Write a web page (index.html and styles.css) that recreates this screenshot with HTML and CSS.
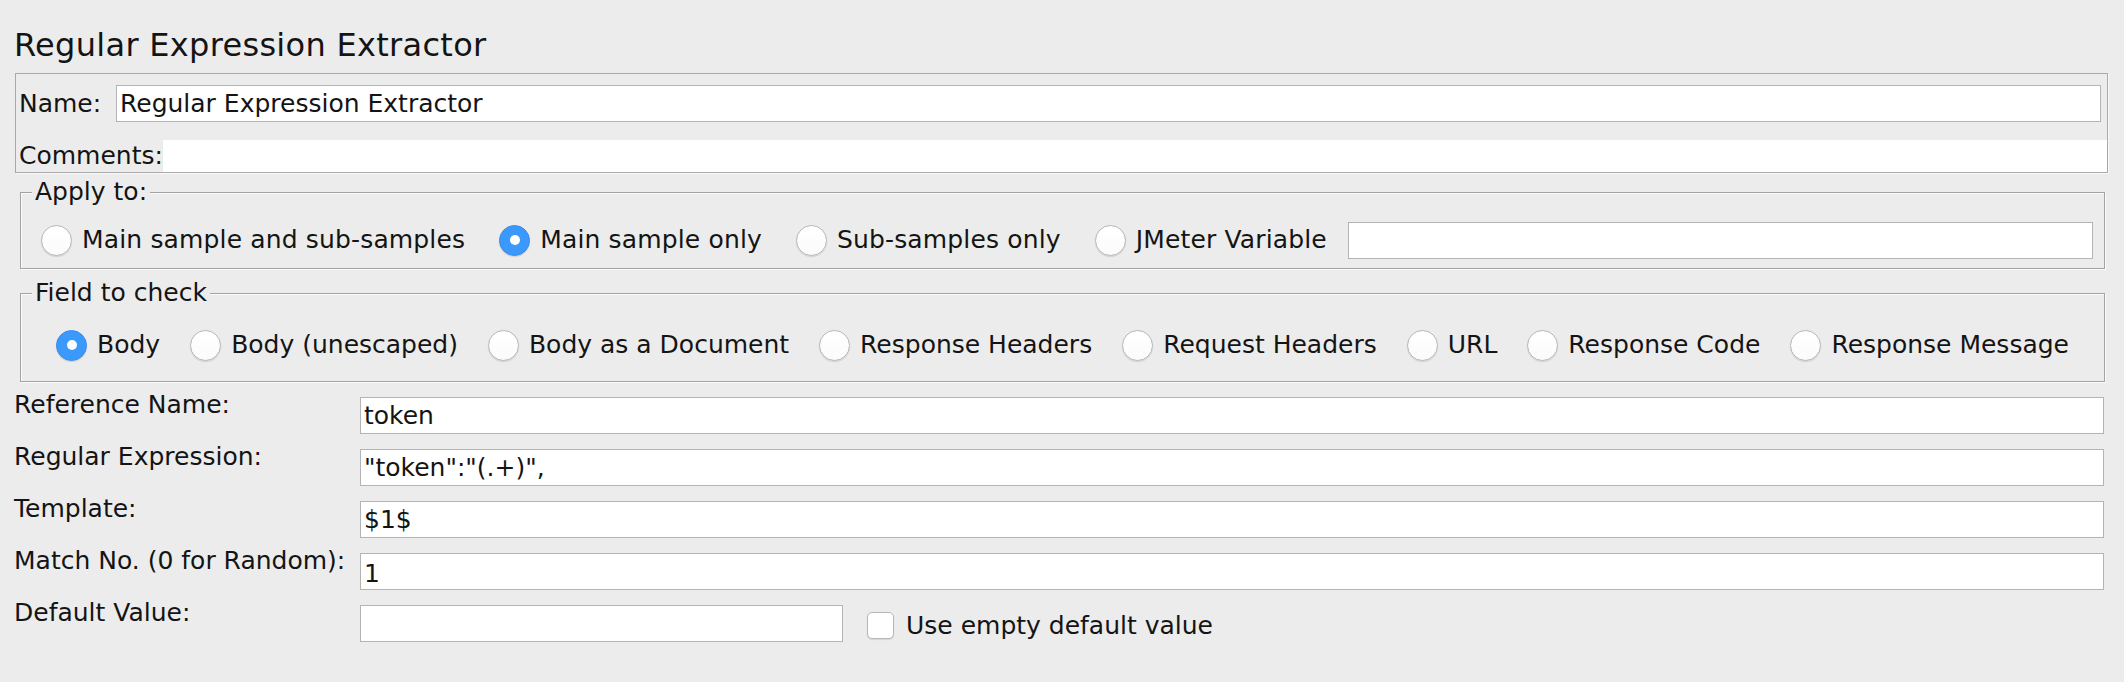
FILE: index.html
```html
<!DOCTYPE html>
<html>
<head>
<meta charset="utf-8">
<title>Regular Expression Extractor</title>
<link rel="stylesheet" href="styles.css">
</head>
<body>
<div class="page">
  <h1 class="title">Regular Expression Extractor</h1>

  <div class="namepanel">
    <div class="name-row">
      <label class="name-label">Name:</label>
      <input class="tf name-tf" type="text" value="Regular Expression Extractor">
    </div>
    <div class="comments-row">
      <label class="comments-label">Comments:</label>
      <div class="comments-area"></div>
    </div>
  </div>

  <fieldset class="group apply">
    <legend>Apply to:</legend>
    <div class="apply-row">
      <span class="radio"><span class="rb"></span><span class="rl">Main sample and sub-samples</span></span>
      <span class="radio"><span class="rb on"></span><span class="rl">Main sample only</span></span>
      <span class="radio"><span class="rb"></span><span class="rl">Sub-samples only</span></span>
      <span class="radio"><span class="rb"></span><span class="rl">JMeter Variable</span></span>
      <input class="tf var-tf" type="text" value="">
    </div>
  </fieldset>

  <fieldset class="group field">
    <legend>Field to check</legend>
    <div class="field-row">
      <span class="radio"><span class="rb on"></span><span class="rl">Body</span></span>
      <span class="radio"><span class="rb"></span><span class="rl">Body (unescaped)</span></span>
      <span class="radio"><span class="rb"></span><span class="rl">Body as a Document</span></span>
      <span class="radio"><span class="rb"></span><span class="rl">Response Headers</span></span>
      <span class="radio"><span class="rb"></span><span class="rl">Request Headers</span></span>
      <span class="radio"><span class="rb"></span><span class="rl">URL</span></span>
      <span class="radio"><span class="rb"></span><span class="rl">Response Code</span></span>
      <span class="radio"><span class="rb"></span><span class="rl">Response Message</span></span>
    </div>
  </fieldset>

  <div class="form">
    <label class="flabel">Reference Name:</label>
    <div class="fcell"><input class="tf" type="text" value="token"></div>

    <label class="flabel">Regular Expression:</label>
    <div class="fcell"><input class="tf" type="text" value="&quot;token&quot;:&quot;(.+)&quot;,"></div>

    <label class="flabel">Template:</label>
    <div class="fcell"><input class="tf" type="text" value="$1$"></div>

    <label class="flabel">Match No. (0 for Random):</label>
    <div class="fcell"><input class="tf match-tf" type="text" value="1"></div>

    <label class="flabel">Default Value:</label>
    <div class="fcell default-cell">
      <input class="tf default-tf" type="text" value="">
      <span class="cb"></span>
      <span class="cl">Use empty default value</span>
    </div>
  </div>
</div>
</body>
</html>
```

FILE: styles.css
```css
html, body {
  margin: 0;
  padding: 0;
  background: #ececec;
}

body {
  font-family: "DejaVu Sans", "Liberation Sans", sans-serif;
  font-size: 25px;
  color: #141414;
  width: 2124px;
  height: 682px;
  overflow: hidden;
}

.page {
  display: flex;
  flex-direction: column;
}

.title {
  margin: 0;
  padding: 26px 0 0 14px;
  font-size: 32px;
  font-weight: normal;
  line-height: 38px;
  letter-spacing: 0.3px;
  color: #141414;
}

/* text field */
.tf {
  box-sizing: border-box;
  height: 37px;
  margin: 0;
  padding: 0 3px;
  border: 1px solid #b4b4b4;
  background: #fff;
  font-family: inherit;
  font-size: 25px;
  color: #141414;
  outline: none;
}

/* name / comments panel */
.namepanel {
  margin: 9px 16px 0 15px;
  border: 1px solid #a9a9a9;
  box-shadow: 1px 1px 0 #fafafa;
}

.name-row {
  display: flex;
  align-items: center;
  padding: 11px 6px 0 3px;
}

.name-label {
  width: 97px;
  line-height: 30px;
}

.name-tf {
  flex: 1;
}

.comments-row {
  display: flex;
  align-items: center;
  margin-top: 18px;
  padding-left: 3px;
  height: 32px;
}

.comments-label {
  line-height: 30px;
}

.comments-area {
  flex: 1;
  align-self: stretch;
  background: #fff;
}

/* titled groups */
.group {
  margin: 4px 19px 0 20px;
  padding: 0;
  min-width: 0;
  border: 1px solid #a3a3a3;
  box-shadow: 1px 1px 0 #fbfbfb, inset 1px 1px 0 #fbfbfb;
}

.group legend {
  margin-left: 11px;
  padding: 0 3px;
  line-height: 30px;
  background: #ececec;
}

.field {
  margin-top: 9px;
}

.apply-row {
  display: flex;
  align-items: center;
  height: 38px;
  padding: 14px 11px 9px 20px;
}

.apply-row .rl {
  letter-spacing: 0.15px;
}

.field-row {
  display: flex;
  align-items: center;
  justify-content: center;
  gap: 30px;
  height: 38px;
  padding: 18px 0 17px 0;
}

.radio {
  display: inline-flex;
  align-items: center;
  white-space: nowrap;
  line-height: 30px;
}

.apply-row .radio {
  margin-right: 34px;
}

.apply-row .radio:nth-child(4) {
  margin-right: 21px;
}

.rb {
  position: relative;
  box-sizing: border-box;
  width: 31px;
  height: 31px;
  border-radius: 50%;
  background: linear-gradient(#ffffff, #fbfbfb);
  border: 1px solid #b7b7b7;
  box-shadow: 0 1px 1px rgba(0, 0, 0, 0.12);
  margin-right: 10px;
  flex: none;
}

.rb.on {
  background: #3b99fc;
  border-color: #378ef0;
}

.rb.on::after {
  content: "";
  position: absolute;
  left: 50%;
  top: 50%;
  width: 10px;
  height: 10px;
  margin: -5px 0 0 -5px;
  border-radius: 50%;
  background: #fff;
}

.var-tf {
  flex: 1;
  min-width: 0;
}

/* form grid */
.form {
  display: grid;
  grid-template-columns: 346px 1fr;
  row-gap: 8px;
  margin: 8px 20px 0 14px;
}

.flabel {
  line-height: 30px;
  align-self: start;
  white-space: nowrap;
}

.fcell {
  display: flex;
  align-items: center;
  padding-top: 7px;
}

.fcell .tf {
  flex: 1;
  min-width: 0;
}

.match-tf {
  padding-top: 4px;
}

.fcell .default-tf {
  flex: none;
  width: 483px;
}

.cb {
  box-sizing: border-box;
  width: 27px;
  height: 27px;
  margin-left: 24px;
  margin-top: 4px;
  border: 1px solid #b7b7b7;
  border-radius: 5px;
  background: #fff;
  box-shadow: 0 1px 1px rgba(0, 0, 0, 0.1);
  flex: none;
}

.cl {
  margin-left: 12px;
  margin-top: 4px;
  line-height: 30px;
  white-space: nowrap;
}
```
